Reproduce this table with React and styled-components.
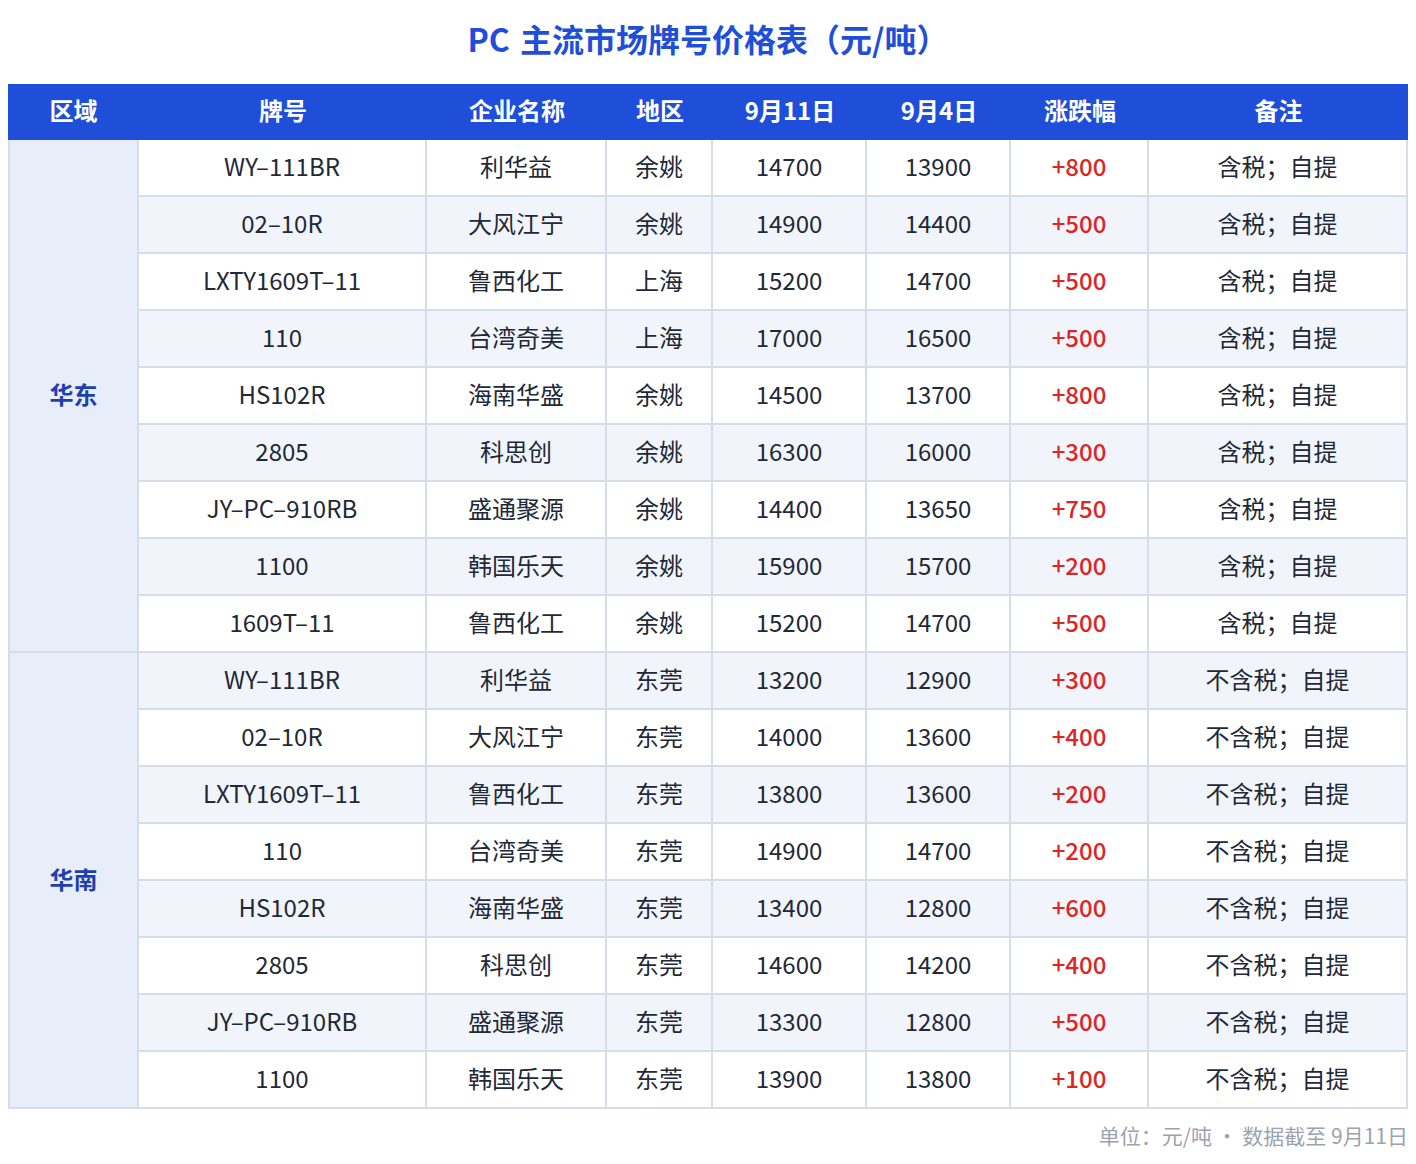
import styled, { createGlobalStyle } from 'styled-components';

const GlobalStyle = createGlobalStyle`
  body {
    margin: 0;
    background: #ffffff;
    font-family: "Noto Sans CJK SC", "Noto Sans", sans-serif;
    color: #1f2937;
  }
`;

const Page = styled.div`
  padding: 0 8px;
  width: 1400px;
`;

const Title = styled.h1`
  margin: 0 0 8px;
  height: 76px;
  line-height: 76px;
  text-align: center;
  font-size: 32px;
  font-weight: 700;
  color: #1f4fd8;
  word-spacing: 3px;
`;

const Table = styled.table`
  width: 1400px;
  table-layout: fixed;
  border-collapse: separate;
  border-spacing: 0;
`;

const HeadCell = styled.th`
  width: ${p => p.$w}px;
  height: 51px;
  padding: 0 0 5px;
  background: #1f4fd8;
  color: #ffffff;
  font-size: 24px;
  font-weight: 700;
  text-align: center;
`;

const Row = styled.tr`
  background: ${p => (p.$striped ? '#f1f5fb' : '#ffffff')};
`;

const Cell = styled.td`
  padding: 0 0 4px;
  line-height: 51px;
  font-size: 24px;
  text-align: center;
  border-right: 2px solid #d5dde8;
  border-bottom: 2px solid #d5dde8;
  color: ${p => (p.$up ? '#dc2626' : '#1f2937')};
  font-weight: ${p => (p.$up ? 500 : 400)};
  white-space: nowrap;
`;

const RegionCell = styled.td`
  padding: 0 0 4px;
  text-align: center;
  vertical-align: middle;
  background: #e7eef9;
  color: #1e40af;
  font-size: 24px;
  font-weight: 700;
  border-left: 2px solid #d5dde8;
  border-right: 2px solid #d5dde8;
  border-bottom: 2px solid #d5dde8;
`;

const Footer = styled.div`
  margin-top: 12px;
  text-align: right;
  font-size: 21px;
  line-height: 28px;
  color: #9ca3af;
`;

const columns = [
  { label: '区域', w: 131 },
  { label: '牌号', w: 288 },
  { label: '企业名称', w: 180 },
  { label: '地区', w: 106 },
  { label: '9月11日', w: 154 },
  { label: '9月4日', w: 144 },
  { label: '涨跌幅', w: 138 },
  { label: '备注', w: 259 },
];

const groups = [
  {
    region: '华东',
    rows: [
      ['WY–111BR', '利华益', '余姚', '14700', '13900', '+800', '含税；自提'],
      ['02–10R', '大风江宁', '余姚', '14900', '14400', '+500', '含税；自提'],
      ['LXTY1609T–11', '鲁西化工', '上海', '15200', '14700', '+500', '含税；自提'],
      ['110', '台湾奇美', '上海', '17000', '16500', '+500', '含税；自提'],
      ['HS102R', '海南华盛', '余姚', '14500', '13700', '+800', '含税；自提'],
      ['2805', '科思创', '余姚', '16300', '16000', '+300', '含税；自提'],
      ['JY–PC–910RB', '盛通聚源', '余姚', '14400', '13650', '+750', '含税；自提'],
      ['1100', '韩国乐天', '余姚', '15900', '15700', '+200', '含税；自提'],
      ['1609T–11', '鲁西化工', '余姚', '15200', '14700', '+500', '含税；自提'],
    ],
  },
  {
    region: '华南',
    rows: [
      ['WY–111BR', '利华益', '东莞', '13200', '12900', '+300', '不含税；自提'],
      ['02–10R', '大风江宁', '东莞', '14000', '13600', '+400', '不含税；自提'],
      ['LXTY1609T–11', '鲁西化工', '东莞', '13800', '13600', '+200', '不含税；自提'],
      ['110', '台湾奇美', '东莞', '14900', '14700', '+200', '不含税；自提'],
      ['HS102R', '海南华盛', '东莞', '13400', '12800', '+600', '不含税；自提'],
      ['2805', '科思创', '东莞', '14600', '14200', '+400', '不含税；自提'],
      ['JY–PC–910RB', '盛通聚源', '东莞', '13300', '12800', '+500', '不含税；自提'],
      ['1100', '韩国乐天', '东莞', '13900', '13800', '+100', '不含税；自提'],
    ],
  },
];

const App = () => {
  let index = 0;
  return (
    <>
      <GlobalStyle />
      <Page>
        <Title>PC 主流市场牌号价格表（元/吨）</Title>
        <Table>
          <thead>
            <tr>
              {columns.map(c => (
                <HeadCell key={c.label} $w={c.w}>
                  {c.label}
                </HeadCell>
              ))}
            </tr>
          </thead>
          <tbody>
            {groups.map(g =>
              g.rows.map((r, i) => {
                const striped = index % 2 === 1;
                index += 1;
                return (
                  <Row key={g.region + i} $striped={striped}>
                    {i === 0 ? (
                      <RegionCell rowSpan={g.rows.length}>{g.region}</RegionCell>
                    ) : null}
                    {r.map((v, j) => (
                      <Cell key={j} $up={j === 5}>
                        {v}
                      </Cell>
                    ))}
                  </Row>
                );
              })
            )}
          </tbody>
        </Table>
        <Footer>单位：元/吨 · 数据截至 9月11日</Footer>
      </Page>
    </>
  );
};

export default App;
